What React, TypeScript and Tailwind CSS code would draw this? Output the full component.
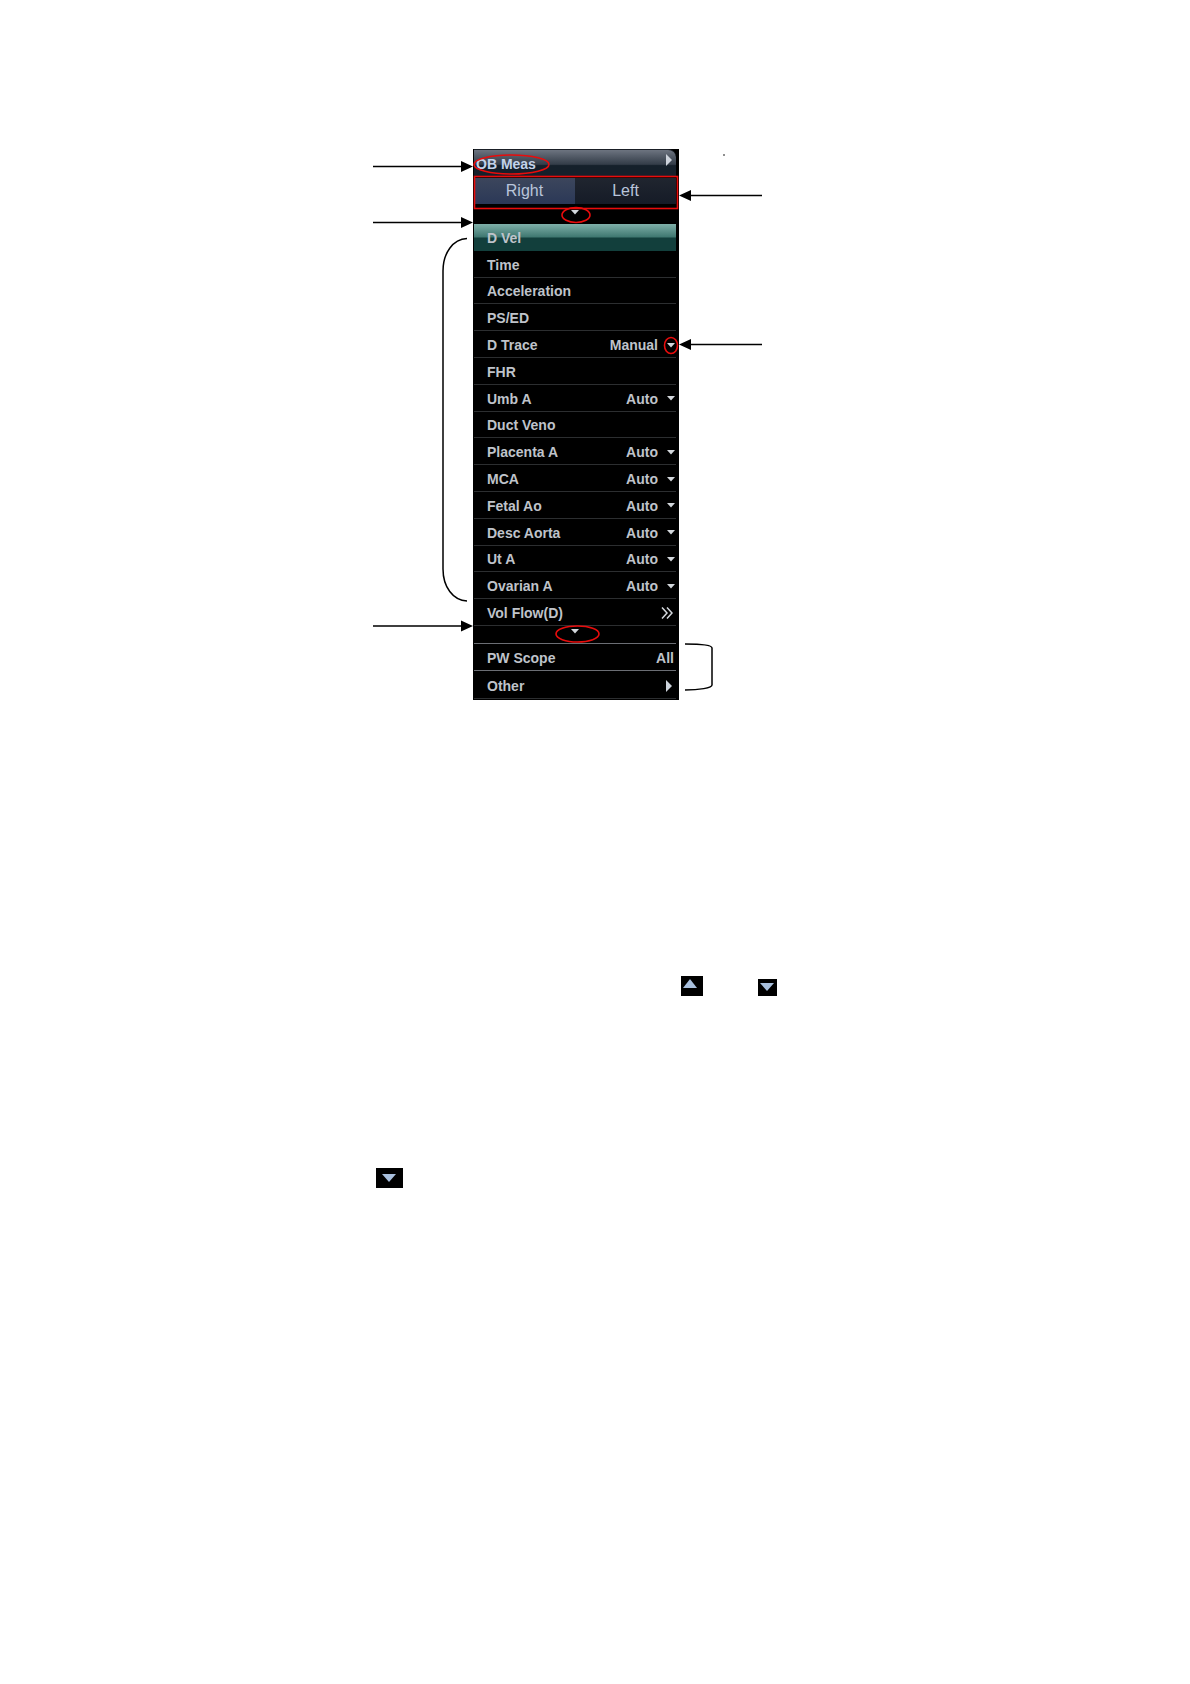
import { useState } from "react";

interface MeasItem {
    name: string;
    method?: string;
    more?: boolean;
}

const items: MeasItem[] = [
    { name: "D Vel" },
    { name: "Time" },
    { name: "Acceleration" },
    { name: "PS/ED" },
    { name: "D Trace", method: "Manual" },
    { name: "FHR" },
    { name: "Umb A", method: "Auto" },
    { name: "Duct Veno" },
    { name: "Placenta A", method: "Auto" },
    { name: "MCA", method: "Auto" },
    { name: "Fetal Ao", method: "Auto" },
    { name: "Desc Aorta", method: "Auto" },
    { name: "Ut A", method: "Auto" },
    { name: "Ovarian A", method: "Auto" },
    { name: "Vol Flow(D)", more: true }
];

function DownArrow() {
    return (
        <svg width="8" height="5" viewBox="0 0 8 5" className="shrink-0" aria-hidden="true">
            <path d="M0 0H8L4 4.5Z" fill="#d3d7dc" />
        </svg>
    );
}

function RightArrow() {
    return (
        <svg width="6" height="12" viewBox="0 0 6 12" className="shrink-0" aria-hidden="true">
            <path d="M0 0L6 6L0 12Z" fill="#cdd3dc" />
        </svg>
    );
}

function DoubleChevron() {
    return (
        <svg width="12" height="12" viewBox="0 0 12 12" className="shrink-0" aria-hidden="true">
            <path d="M1 .5L6 6L1 11.5M6 .5L11 6L6 11.5" fill="none" stroke="#d3d7dc" strokeWidth="1.5" />
        </svg>
    );
}

function ItemRow({ item, active, onPick }: { item: MeasItem; active: boolean; onPick: () => void }) {
    return (
        <li
            className={
                active
                    ? "flex items-center bg-linear-to-b from-[#7fb0a9] from-0% via-[#3f7871] via-48% to-[#123f3c] to-52% pt-0.5 pr-[3px] pl-[13px]"
                    : "flex items-center border-b border-[#2c2e30] pt-0.5 pr-[3px] pl-[13px]"
            }
        >
            <button type="button" onClick={onPick} className="grow text-left leading-4 whitespace-nowrap">
                {item.name}
            </button>
            {item.method && (
                <label className="-mr-0.5 flex items-center">
                    <select
                        aria-label={item.name + " method"}
                        defaultValue={item.method}
                        className="mr-[9px] appearance-none text-right leading-4 [field-sizing:content]"
                    >
                        <option>Manual</option>
                        <option>Auto</option>
                    </select>
                    <DownArrow />
                </label>
            )}
            {item.more && <DoubleChevron />}
        </li>
    );
}

function MeasMenu() {
    const [side, setSide] = useState("Right");
    const [active, setActive] = useState("D Vel");

    return (
        <section className="relative w-[206px] shrink-0 bg-black pr-[3px] pb-px pl-px text-sm font-bold text-[#bfc3ca]">
            <header className="flex h-[27px] justify-between rounded-tr-lg border-t border-[#1a1f26] bg-linear-to-b from-[#6d7480] from-0% via-[#343d49] via-55% to-[#15202b] to-60% pr-1 pl-[2px]">
                <h1 className="pt-[6px] leading-4 text-[#c3d3ea]">OB Meas</h1>
                <button type="button" aria-label="Next menu" className="self-start pt-[4px]">
                    <RightArrow />
                </button>
            </header>

            <div className="mt-[2px] grid h-[26px] grid-cols-2 text-base font-normal text-[#b9c5da]">
                {["Right", "Left"].map((name) => (
                    <button
                        key={name}
                        type="button"
                        onClick={() => setSide(name)}
                        className={
                            side === name
                                ? "bg-linear-to-b from-[#3c465c] to-[#2b3857]"
                                : "bg-linear-to-b from-[#20252f] to-[#151b27]"
                        }
                    >
                        {name}
                    </button>
                ))}
            </div>

            <button type="button" aria-label="Scroll up" className="flex h-5 w-full items-start justify-center pt-[6px]">
                <DownArrow />
            </button>

            <ul className="grid h-[402px] auto-rows-fr">
                {items.map((item) => (
                    <ItemRow
                        key={item.name}
                        item={item}
                        active={item.name === active}
                        onPick={() => setActive(item.name)}
                    />
                ))}
            </ul>

            <button type="button" aria-label="Scroll down" className="flex h-[17px] w-full items-start justify-center pt-[3px]">
                <DownArrow />
            </button>

            <button
                type="button"
                className="flex h-7 w-full items-center justify-between border-y border-[#6b6e74] pt-0.5 pr-[2px] pl-[13px]"
            >
                <span>PW Scope</span>
                <span>All</span>
            </button>
            <button
                type="button"
                className="flex h-7 w-full items-center justify-between border-b border-[#2c2e30] pt-0.5 pr-1 pl-[13px]"
            >
                <span>Other</span>
                <RightArrow />
            </button>

            {/* red highlight marks */}
            <svg
                viewBox="0 0 206 551"
                className="pointer-events-none absolute inset-0 h-[551px] w-[206px] overflow-visible"
                fill="none"
                stroke="#e80c0c"
                strokeWidth="1.6"
                aria-hidden="true"
            >
                <ellipse cx="38.5" cy="15.5" rx="37.5" ry="9.5" />
                <rect x="1.5" y="27.5" width="203" height="32" />
                <ellipse cx="103" cy="66" rx="14" ry="7.5" />
                <ellipse cx="198" cy="196.5" rx="6.5" ry="8" />
                <ellipse cx="104.5" cy="485" rx="21.5" ry="8" />
            </svg>
        </section>
    );
}

function LeftCallouts() {
    return (
        <svg
            width="100"
            height="551"
            viewBox="0 0 100 551"
            className="shrink-0"
            fill="none"
            stroke="#000"
            strokeWidth="1.5"
            aria-hidden="true"
        >
            <path d="M0 17.5H90M0 73.5H90M0 477H90" />
            <path d="M88 12L100 17.5L88 23ZM88 68L100 73.5L88 79ZM88 471.5L100 477L88 482.5Z" fill="#000" stroke="none" />
            <path d="M94 89.5C80 90 70 104 70 122V420C70 438 80 451.5 94 452" />
        </svg>
    );
}

function RightCallouts() {
    return (
        <svg
            width="100"
            height="551"
            viewBox="0 0 100 551"
            className="shrink-0"
            fill="none"
            stroke="#000"
            strokeWidth="1.5"
            aria-hidden="true"
        >
            <path d="M10 46.5H83M10 195.5H83" />
            <path d="M0 46.5L12 41V52ZM0 195.5L12 190V201Z" fill="#000" stroke="none" />
            <path d="M6 495C20 495 33 496 33 499V536C33 539 20 541 6 541" />
            <circle cx="45" cy="6" r=".8" fill="#000" stroke="none" />
        </svg>
    );
}

export default function App() {
    return (
        <main className="min-h-screen bg-white pt-[149px] font-['Liberation_Sans',Arial,sans-serif]">
            <figure className="flex justify-center pr-[38px]">
                <LeftCallouts />
                <MeasMenu />
                <RightCallouts />
            </figure>

            <div className="mt-[276px] flex items-end gap-[55px] pl-[681px]">
                <button type="button" aria-label="Up" className="flex h-5 w-[22px] items-start bg-black pt-[3px] pl-[2px]">
                    <svg width="14" height="9" viewBox="0 0 14 9" aria-hidden="true">
                        <path d="M7 0L14 9H0Z" fill="#a9c0de" />
                    </svg>
                </button>
                <button type="button" aria-label="Down" className="flex h-[17px] w-[19px] items-start bg-black pt-1 pl-[2px]">
                    <svg width="14" height="8" viewBox="0 0 14 8" aria-hidden="true">
                        <path d="M0 0H14L7 8Z" fill="#a9c0de" />
                    </svg>
                </button>
            </div>

            <div className="mt-[172px] flex pl-[376px]">
                <button type="button" aria-label="Expand" className="flex h-5 w-[27px] items-start bg-black pt-[6px] pl-[6px]">
                    <svg width="14" height="8" viewBox="0 0 14 8" aria-hidden="true">
                        <path d="M0 0H14L7 8Z" fill="#a9c0de" />
                    </svg>
                </button>
            </div>
        </main>
    );
}
